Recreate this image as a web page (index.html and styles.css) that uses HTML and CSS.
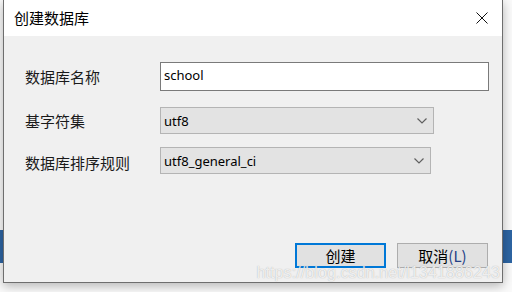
FILE: index.html
```html
<!DOCTYPE html>
<html lang="zh-CN">
<head>
    <meta charset="UTF-8">
    <title>创建数据库</title>
    <link rel="stylesheet" href="styles.css">
</head>
<body>
    <div class="backdrop-bar"></div>

    <div class="dialog">
        <div class="title-bar">
            <span class="title">创建数据库</span>
            <svg class="close" width="12" height="12" viewBox="0 0 12 12">
                <path d="M0.5 0.5 L11.5 11.5 M11.5 0.5 L0.5 11.5" stroke="#111" stroke-width="1" fill="none"/>
            </svg>
        </div>

        <div class="content">
            <div class="form">
                <label class="label">数据库名称</label>
                <div class="input">school</div>

                <label class="label">基字符集</label>
                <div class="select select-wide">
                    <span>utf8</span>
                    <svg width="10" height="6" viewBox="0 0 10 6"><path d="M0.5 0.5 L5 5 L9.5 0.5" stroke="#606060" stroke-width="1.2" fill="none"/></svg>
                </div>

                <label class="label">数据库排序规则</label>
                <div class="select select-narrow">
                    <span>utf8_general_ci</span>
                    <svg width="10" height="6" viewBox="0 0 10 6"><path d="M0.5 0.5 L5 5 L9.5 0.5" stroke="#606060" stroke-width="1.2" fill="none"/></svg>
                </div>
            </div>

            <div class="buttons">
                <button class="btn btn-default">创建</button>
                <button class="btn">取消<span class="accel">(L)</span></button>
            </div>
        </div>

        <div class="watermark">https://blog.csdn.net/l1341886243</div>
    </div>
</body>
</html>
```

FILE: styles.css
```css
body {
    margin: 0;
    width: 512px;
    height: 292px;
    overflow: hidden;
    background: #fafafa;
    font-family: "Noto Sans CJK SC", "Noto Sans", sans-serif;
    position: relative;
}

.backdrop-bar {
    position: absolute;
    top: 230px;
    left: 0;
    width: 100%;
    height: 33px;
    background: #2d65a3;
}

.dialog {
    position: relative;
    z-index: 1;
    margin-left: 3px;
    width: 500px;
    height: 283px;
    box-sizing: border-box;
    border: 1px solid #6e6e6e;
    border-top: none;
    background: #f0f0f0;
    box-shadow: 0 3px 10px rgba(0, 0, 0, 0.28);
    display: flex;
    flex-direction: column;
}

.title-bar {
    height: 36px;
    background: #fff;
    display: flex;
    align-items: center;
    justify-content: space-between;
    padding: 0 14px 0 10px;
}

.title {
    font-size: 15px;
    color: #000;
    margin-top: -2px;
}

.close {
    margin-top: -1px;
}

.content {
    flex: 1;
    padding: 26px 14px 14px 21px;
    display: flex;
    flex-direction: column;
}

.form {
    display: grid;
    grid-template-columns: 135px auto;
    align-items: center;
    justify-items: start;
    row-gap: 16px;
}

.label {
    font-size: 15px;
    color: #1a1a1a;
}

.input {
    width: 329px;
    height: 29px;
    box-sizing: border-box;
    border: 1px solid #7a7a7a;
    background: #fff;
    font-family: "Noto Sans", sans-serif;
    font-size: 13px;
    line-height: 25px;
    padding-left: 3px;
    color: #000;
}

.select {
    height: 27px;
    box-sizing: border-box;
    border: 1px solid #b4b4b4;
    background: #e3e3e3;
    display: flex;
    align-items: center;
    justify-content: space-between;
    padding: 0 6px 0 3px;
    font-family: "Noto Sans", sans-serif;
    font-size: 13px;
    color: #000;
}

.select-wide {
    width: 274px;
}

.select-narrow {
    width: 271px;
    margin-top: -3px;
}

.buttons {
    margin-top: auto;
    display: flex;
    justify-content: flex-end;
    gap: 11px;
}

.btn {
    width: 91px;
    height: 25px;
    box-sizing: border-box;
    border: 1px solid #adadad;
    background: #e1e1e1;
    font-family: "Noto Sans CJK SC", sans-serif;
    font-size: 15px;
    line-height: 20px;
    padding: 0;
    color: #000;
}

.btn-default {
    border: 2px solid #0078d7;
}

.accel {
    color: #233f86;
}

.watermark {
    position: absolute;
    right: 2px;
    bottom: 0;
    font-family: "Liberation Sans", sans-serif;
    font-size: 16px;
    color: rgba(255, 255, 255, 0.8);
    text-shadow: 0 0 1px rgba(110, 110, 110, 0.55);
    letter-spacing: 0.1px;
}
```
